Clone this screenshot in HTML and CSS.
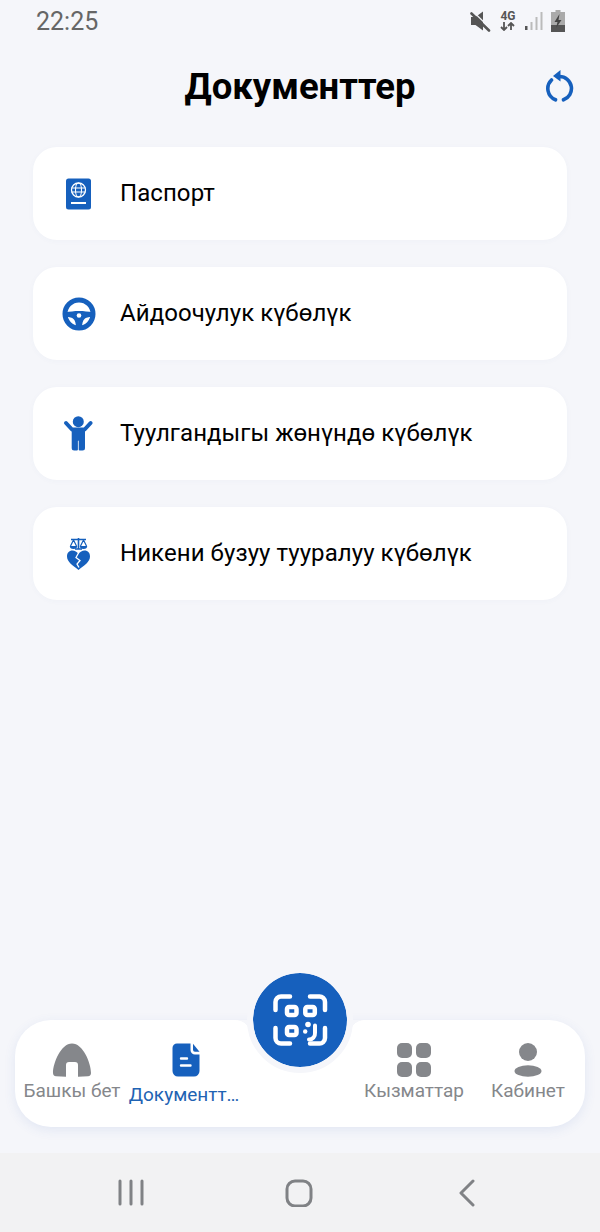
FILE: index.html
```html
<!DOCTYPE html>
<html lang="ky">
<head>
    <meta charset="UTF-8">
    <meta name="viewport" content="width=device-width, initial-scale=1.0">
    <title>Документтер</title>
    <link rel="stylesheet" href="styles.css">
</head>
<body>
    <div class="screen">
        <div class="status-bar">
            <span class="clock">22:25</span>
            <div class="status-icons">
                <svg width="22" height="22" viewBox="0 0 22 22"><path d="M2 7h4.500L14 1.500v19L6.500 15H2z" fill="#555"/><path d="M2.500 3.500L20 20.500" stroke="#555" stroke-width="2.600" stroke-linecap="round"/><path d="M4 1.500L20 17" stroke="#f5f6fa" stroke-width="1.200"/></svg>
                <div class="net">
                    <span class="net-label">4G</span>
                    <svg width="18" height="9" viewBox="0 0 18 9"><path d="M5 0v8M2 5l3 3 3-3M12 8V1M9 4l3-3 3 3" fill="none" stroke="#555" stroke-width="1.800"/></svg>
                </div>
                <svg width="18" height="20" viewBox="0 0 18 20"><rect y="15" width="2.500" height="4" fill="#555"/><rect x="5.500" y="11" width="2" height="8" fill="#bbb"/><rect x="10.500" y="6" width="2" height="13" fill="#bbb"/><rect x="15.500" y="1" width="2" height="18" fill="#bbb"/></svg>
                <svg width="14" height="22" viewBox="0 0 14 22"><path d="M4.500 0h5v2H14v20H0V2h4.500z" fill="#aaa"/><rect y="15" width="14" height="7" fill="#555"/><path d="M8.500 4L3.500 12h3l-1.500 6 5.500-8H7.500z" fill="#444"/></svg>
            </div>
        </div>

        <header class="top-bar">
            <h1>Документтер</h1>
            <svg class="refresh" width="32" height="32" viewBox="0 0 32 32"><path d="M7.500 10A12 12 0 0 0 11.500 29.800M19.500 29.800A12 12 0 0 0 15.500 6.500" fill="none" stroke="#1660bd" stroke-width="3.600" stroke-linecap="round"/><path d="M16.500 0v11.500L9 6z" fill="#1660bd"/></svg>
        </header>

        <main class="doc-list">
            <div class="doc-card">
                <svg class="doc-icon" width="36" height="36" viewBox="0 0 36 36">
                    <rect x="6" y="2.500" width="25" height="31" rx="2.500" fill="#1660bd"/>
                    <circle cx="18.500" cy="14" r="7" fill="none" stroke="#fff" stroke-width="1.300"/>
                    <ellipse cx="18.500" cy="14" rx="3" ry="7" fill="none" stroke="#fff" stroke-width="1.100"/>
                    <path d="M11.500 12h14M11.500 16h14" stroke="#fff" stroke-width="1.100"/>
                    <rect x="11" y="26" width="15" height="2" fill="#fff"/>
                </svg>
                <span>Паспорт</span>
            </div>
            <div class="doc-card">
                <svg class="doc-icon" width="36" height="36" viewBox="0 0 36 36">
                    <circle cx="19" cy="18" r="14" fill="none" stroke="#1660bd" stroke-width="5"/>
                    <path d="M5 16.500c5-1 9-1.500 14-1.500s9 .5 14 1.500v4.500c-5 0-7 .5-8.500 2-1.500 1.500-2.500 4-2.500 9h-6c0-5-1-7.500-2.500-9-1.500-1.500-3.500-2-8.500-2z" fill="#1660bd"/>
                    <circle cx="19" cy="19.500" r="2.300" fill="#fff"/>
                </svg>
                <span>Айдоочулук күбөлүк</span>
            </div>
            <div class="doc-card">
                <svg class="doc-icon" width="36" height="36" viewBox="0 0 36 36">
                    <circle cx="18.300" cy="5.700" r="5.500" fill="#1660bd"/>
                    <path d="M6 7l6 6.500h12.600L30.600 7" fill="none" stroke="#1660bd" stroke-width="4" stroke-linecap="round" stroke-linejoin="round"/>
                    <path d="M11.700 13h13.300v19a2.500 2.500 0 0 1-2.500 2.500h-2.800a1 1 0 0 1-1-1V25a.4.400 0 0 0-.800 0v8.500a1 1 0 0 1-1 1h-2.700a2.500 2.500 0 0 1-2.500-2.500z" fill="#1660bd"/>
                </svg>
                <span>Туулгандыгы жөнүндө күбөлүк</span>
            </div>
            <div class="doc-card">
                <svg class="doc-icon" width="36" height="36" viewBox="0 0 36 36">
                    <path d="M11 3.500h15M18.500 2v11M15 13h7" stroke="#1660bd" stroke-width="1.600" fill="none"/>
                    <path d="M13.500 4L10.500 10M13.500 4L16.500 10M23.500 4L20.500 10M23.500 4L26.500 10" stroke="#1660bd" stroke-width="1.200"/>
                    <path d="M9.800 10h7.400a3.700 3 0 0 1-7.400 0zM19.800 10h7.400a3.700 3 0 0 1-7.400 0z" fill="#1660bd"/>
                    <path d="M18.500 18c-1.500-2.300-3.800-3.500-6-3.500C9 14.500 7 17 7 20.500c0 5.500 6 9 11.500 13.500 5.500-4.500 11.500-8 11.500-13.500 0-3.500-2-6-5.500-6-2.200 0-4.500 1.200-6 3.500z" fill="#1660bd"/>
                    <path d="M18.500 17l-2.500 4.500 4 3-3 3.500 2 3.500" fill="none" stroke="#fff" stroke-width="1.300"/>
                </svg>
                <span>Никени бузуу тууралуу күбөлүк</span>
            </div>
        </main>

        <nav class="bottom-nav">
            <div class="nav-panel">
                <div class="nav-item">
                    <svg width="40" height="34" viewBox="0 0 40 34"><path d="M1 30C1 20 9 .5 20 .5S39 20 39 30c0 2-1 3-3 3.200l-10 .5V22a3 3 0 0 0-3-3h-6a3 3 0 0 0-3 3v11.700l-10-.5C2 33 1 32 1 30z" fill="#85878b"/></svg>
                    <span>Башкы бет</span>
                </div>
                <div class="nav-item nav-active">
                    <svg width="28" height="34" viewBox="0 0 28 34"><path d="M5 .5h13.500V7a4.500 4.500 0 0 0 4.500 4.500h4.500V28a5.500 5.500 0 0 1-5.500 5.500H6A5.500 5.500 0 0 1 .5 28V5A4.500 4.500 0 0 1 5 .5z" fill="#1660bd"/><path d="M21 .8l6.500 8h-4.500a2 2 0 0 1-2-2z" fill="#1660bd"/><path d="M9 15.500h6M9 22.500h9.500" stroke="#fff" stroke-width="2.400" stroke-linecap="round"/></svg>
                    <span>Документт…</span>
                </div>
                <div class="nav-gap"></div>
                <div class="nav-item">
                    <svg width="34" height="34" viewBox="0 0 34 34"><rect width="15" height="15" rx="5" fill="#85878b"/><rect x="19" width="15" height="15" rx="5" fill="#85878b"/><rect y="19" width="15" height="15" rx="5" fill="#85878b"/><rect x="19" y="19" width="15" height="15" rx="5" fill="#85878b"/></svg>
                    <span>Кызматтар</span>
                </div>
                <div class="nav-item">
                    <svg width="28" height="34" viewBox="0 0 28 34"><circle cx="14" cy="9" r="9" fill="#85878b"/><ellipse cx="14" cy="28" rx="13.500" ry="5.800" fill="#85878b"/></svg>
                    <span>Кабинет</span>
                </div>
            </div>
            <button class="scan-btn">
                <svg width="60" height="60" viewBox="0 0 60 60" fill="none" stroke="#fff" stroke-linecap="round">
                    <path d="M5.500 20V12a5.500 5.500 0 0 1 5.500-5.500h9M40 6.500h9a5.500 5.500 0 0 1 6 5.500v8M5.500 38v10a5.500 5.500 0 0 0 5.500 5.500h9M55 38v10a5.500 5.500 0 0 1-6 5.500h-9" stroke-width="4.500"/>
                    <rect x="17" y="17" width="9.500" height="8" rx="2" stroke-width="4.500"/>
                    <rect x="35.300" y="17" width="9.500" height="8" rx="2" stroke-width="4.500"/>
                    <rect x="17" y="37" width="9.500" height="8" rx="2" stroke-width="4.500"/>
                    <path d="M45 35.500v7.500a6 6 0 0 1-6 6.500" stroke-width="4"/>
                    <circle cx="38" cy="34.500" r="2.800" fill="#fff" stroke="none"/>
                    <circle cx="35.200" cy="41.500" r="2.200" fill="#fff" stroke="none"/>
                </svg>
            </button>
        </nav>

        <div class="system-nav">
            <svg width="28" height="28" viewBox="0 0 28 28"><path d="M3 2v23M14 2v23M25 2v23" stroke="#808285" stroke-width="3" stroke-linecap="round"/></svg>
            <svg width="28" height="28" viewBox="0 0 28 28"><rect x="2" y="2" width="24" height="25" rx="8" fill="none" stroke="#808285" stroke-width="3"/></svg>
            <svg width="28" height="28" viewBox="0 0 28 28"><path d="M20 2L8 14 20 26" fill="none" stroke="#808285" stroke-width="3" stroke-linecap="round" stroke-linejoin="round"/></svg>
        </div>
    </div>
</body>
</html>
```

FILE: styles.css
```css
html, body {
    margin: 0;
    padding: 0;
}
body {
    font-family: Roboto, "Liberation Sans", sans-serif;
    background-color: #f5f6fa;
    color: #000;
}
.screen {
    width: 600px;
    height: 1232px;
    display: flex;
    flex-direction: column;
    overflow: hidden;
}
.status-bar {
    height: 42px;
    padding: 0 35px 0 36px;
    display: flex;
    justify-content: space-between;
    align-items: center;
}
.clock {
    font-size: 25px;
    color: #666;
}
.status-icons {
    display: flex;
    align-items: center;
    gap: 8px;
}
.net {
    display: flex;
    flex-direction: column;
    align-items: center;
}
.net-label {
    font-size: 12px;
    font-weight: bold;
    line-height: 11px;
    color: #555;
}
.top-bar {
    height: 88px;
    display: flex;
    align-items: center;
    justify-content: center;
    position: relative;
}
.top-bar h1 {
    margin: 0;
    font-size: 36.500px;
    font-weight: bold;
}
.refresh {
    position: absolute;
    right: 24px;
    top: 28px;
}
.doc-list {
    flex: 1;
    padding: 17px 33px 0;
    display: flex;
    flex-direction: column;
    gap: 27px;
}
.doc-card {
    height: 93px;
    background: white;
    border-radius: 24px;
    display: flex;
    align-items: center;
    padding-left: 27px;
    gap: 24px;
    font-size: 24px;
    letter-spacing: 0.07px;
    box-shadow: 0 1px 6px rgba(60,90,160,0.03);
}
.doc-card span {
    padding-bottom: 2px;
}
.bottom-nav {
    height: 181px;
    position: relative;
    padding: 48px 15px 0;
    box-sizing: border-box;
}
.nav-panel {
    height: 107px;
    background: white;
    border-radius: 36px;
    display: flex;
    position: relative;
    box-shadow: 0 3px 12px rgba(60,100,190,0.1);
}
/* rounded shoulders beside the scan button */
.nav-panel::before,
.nav-panel::after {
    content: "";
    position: absolute;
    top: 0;
    width: 14px;
    height: 14px;
}
.nav-panel::before {
    left: 221px;
    background: radial-gradient(circle at 0 100%, white 13.500px, #f5f6fa 14px);
}
.nav-panel::after {
    right: 221px;
    background: radial-gradient(circle at 100% 100%, white 13.500px, #f5f6fa 14px);
}
.nav-item {
    width: 114px;
    display: flex;
    flex-direction: column;
    align-items: center;
    padding-top: 23px;
    font-size: 19px;
    color: #85878b;
    white-space: nowrap;
}
.nav-item span {
    margin-top: 2px;
}
.nav-active {
    color: #1f63b3;
    width: 110px;
}
.nav-active svg {
    margin-left: 4px;
}
.nav-active span {
    margin-top: 6px;
}
.nav-gap {
    flex: 1;
}
.scan-btn {
    position: absolute;
    left: 247px;
    top: -5px;
    width: 106px;
    height: 106px;
    border-radius: 50%;
    background: #1660bd;
    background-clip: padding-box;
    border: 6px solid #f5f6fa;
    padding: 0;
    display: flex;
    align-items: center;
    justify-content: center;
    box-sizing: border-box;
    z-index: 2;
}
.system-nav {
    height: 79px;
    background: #f2f2f3;
    display: flex;
    justify-content: space-between;
    align-items: center;
    padding: 0 119px 0 117px;
}
```
